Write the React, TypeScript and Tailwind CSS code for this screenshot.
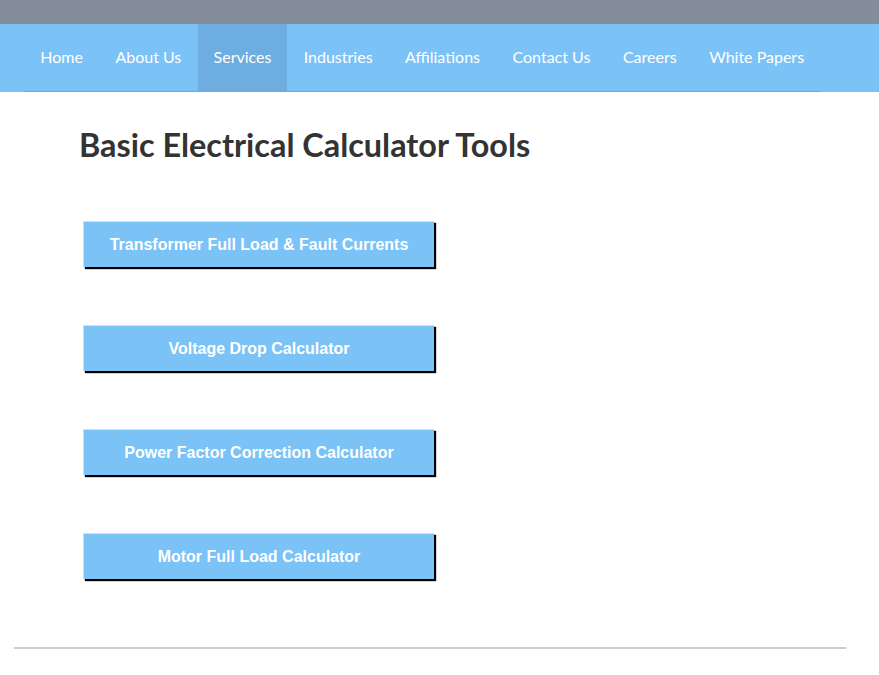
import React from "react";

const navItems = [
  "Home",
  "About Us",
  "Services",
  "Industries",
  "Affiliations",
  "Contact Us",
  "Careers",
  "White Papers",
];

const buttons = [
  "Transformer Full Load & Fault Currents",
  "Voltage Drop Calculator",
  "Power Factor Correction Calculator",
  "Motor Full Load Calculator",
];

export default function App() {
  return (
    <div className="min-h-[675px] w-full bg-white">
      <div className="h-6 w-full bg-[#838d9b]" />
      <div className="w-full bg-[#7bc2f7]">
        <nav className="ml-6 mr-[58px] flex h-[68px] border-b border-[#6fa9d8] font-['Lato',sans-serif] text-[16px] text-white">
          {navItems.map((item) => (
            <div
              key={item}
              className={
                item === "Services"
                  ? "flex h-[67px] shrink-0 items-center whitespace-nowrap bg-[#6eaddf] px-[16px] pb-[2px]"
                  : "flex h-[67px] shrink-0 items-center whitespace-nowrap px-[16.25px] pb-[2px]"
              }
            >
              {item}
            </div>
          ))}
        </nav>
      </div>
      <div className="pl-[79px] pt-[33px]">
        <h1 className="font-['Lato',sans-serif] text-[32.4px] font-bold leading-[40px] text-[#333333]">
          Basic Electrical Calculator Tools
        </h1>
      </div>
      <div className="flex flex-col gap-[58px] pl-[83px] pt-[56px]">
        {buttons.map((b) => (
          <div
            key={b}
            className="flex h-[46px] w-[351px] items-center justify-center border-l border-t border-[#dcdcdc] bg-[#7bc2f7] font-['Liberation_Sans',Arial,sans-serif] text-[16px] font-bold text-white shadow-[2px_2px_1px_#000]"
          >
            {b}
          </div>
        ))}
      </div>
      <div className="mx-[14px] mt-[68px] w-[832px] border-t-2 border-[#cccccc]" />
    </div>
  );
}
